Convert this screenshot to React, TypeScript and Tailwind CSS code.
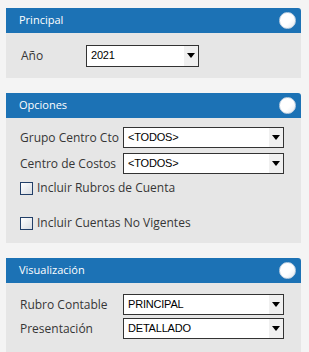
import React from "react";

const labelFont = { fontFamily: '"Open Sans", "Noto Sans", sans-serif' };
const selFont = { fontFamily: '"Liberation Sans", Arial, sans-serif' };

function Header({ title }: { title: string }) {
  return (
    <div className="flex h-[25px] items-center justify-between rounded-tr-[3px] bg-[#1c72b5] pl-[13px] pr-[5px]">
      <span className="text-[11px] text-white" style={labelFont}>
        {title}
      </span>
      <span className="h-[17px] w-[17px] rounded-full border border-[#c3d2e2] bg-gradient-to-br from-white from-60% to-[#e3e8ee]" />
    </div>
  );
}

function Select({ value, w, h = 21 }: { value: string; w: number; h?: number }) {
  return (
    <div
      className="flex items-stretch border border-[#333] bg-white"
      style={{ width: w, height: h }}
    >
      <span
        className="flex flex-1 items-center pl-[4px] text-[11px] tracking-[-0.2px] text-black"
        style={selFont}
      >
        {value}
      </span>
      <span className="flex w-[14px] items-center justify-center bg-[#f0f0f0]">
        <svg width="8" height="5" viewBox="0 0 8 5">
          <path d="M0 0 H8 L4 5 Z" fill="#000" />
        </svg>
      </span>
    </div>
  );
}

function Row({ label, value }: { label: string; value: string }) {
  return (
    <div className="flex items-center">
      <span className="w-[103px] text-[12px] text-[#363636]" style={labelFont}>
        {label}
      </span>
      <Select value={value} w={161} />
    </div>
  );
}

function Check({ label }: { label: string }) {
  return (
    <div className="flex items-center gap-[4px]">
      <span className="h-[13px] w-[13px] border border-[#223f68] bg-gradient-to-br from-white to-[#d8dce2]" />
      <span className="text-[12px] text-[#363636]" style={labelFont}>
        {label}
      </span>
    </div>
  );
}

export default function App() {
  return (
    <div className="h-[352px] w-[309px] overflow-hidden bg-[#f4f4f4] pl-[6px] pt-[8px]">
      <div className="flex w-[295px] flex-col gap-[15px]">
        <div>
          <Header title="Principal" />
          <div className="flex h-[45px] items-center bg-[#e6e6e6] pl-[15px]">
            <span className="w-[65px] text-[12px] text-[#363636]" style={labelFont}>
              Año
            </span>
            <Select value="2021" w={113} h={22} />
          </div>
        </div>

        <div>
          <Header title="Opciones" />
          <div className="flex h-[125px] flex-col bg-[#e6e6e6] pl-[14px] pt-[9px]">
            <div className="flex flex-col gap-[5px]">
              <Row label="Grupo Centro Cto" value="<TODOS>" />
              <Row label="Centro de Costos" value="<TODOS>" />
            </div>
            <div className="mt-[5px]">
              <Check label="Incluir Rubros de Cuenta" />
            </div>
            <div className="mt-[17px]">
              <Check label="Incluir Cuentas No Vigentes" />
            </div>
          </div>
        </div>

        <div>
          <Header title="Visualización" />
          <div className="flex h-[80px] flex-col gap-[3px] bg-[#e6e6e6] pl-[14px] pt-[11px]">
            <Row label="Rubro Contable" value="PRINCIPAL" />
            <Row label="Presentación" value="DETALLADO" />
          </div>
        </div>
      </div>
    </div>
  );
}
